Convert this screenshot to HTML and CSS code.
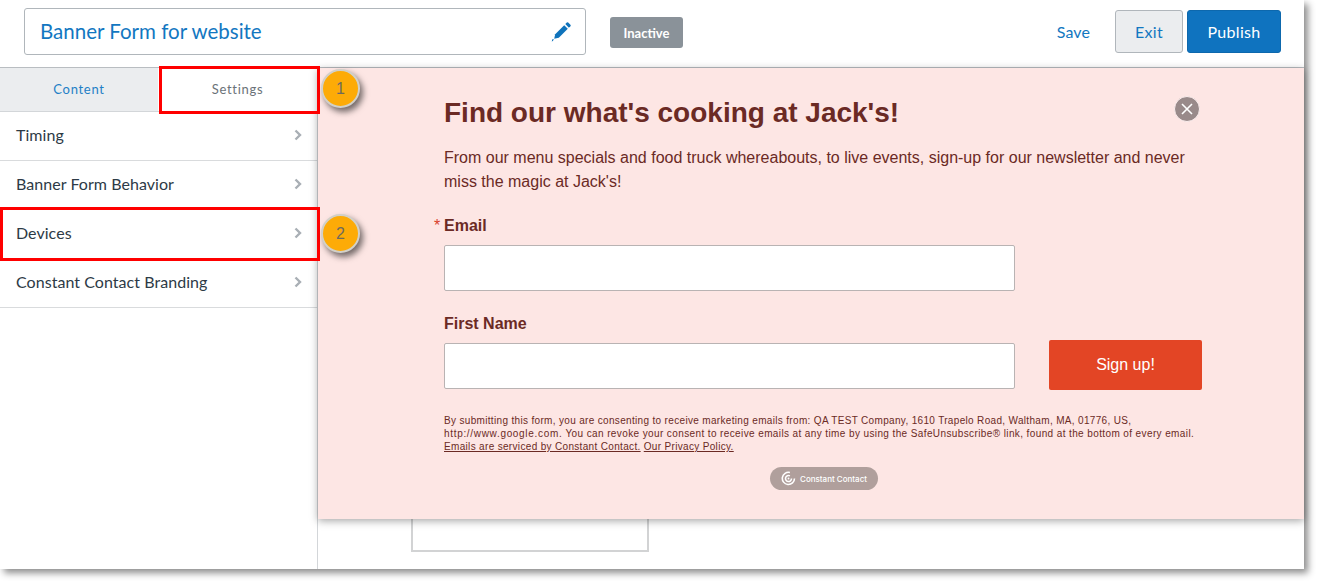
FILE: index.html
```html
<!DOCTYPE html>
<html lang="en">
<head>
<meta charset="utf-8">
<title>Banner Form for website</title>
<link rel="stylesheet" href="styles.css">
</head>
<body>
<div class="window">
  <header class="topbar">
    <div class="name-field">
      <span class="name-text">Banner Form for website</span>
      <svg class="pencil" viewBox="0 0 22 22" width="22" height="22"><path d="M6.2 14.2L15.2 5.2l3.6 3.6-9 9-4.6 1z"/><path d="M16.3 4.1l1.5-1.5a1 1 0 0 1 1.4 0l2.2 2.2a1 1 0 0 1 0 1.4l-1.5 1.5z"/><path d="M3.4 19.2l1.4-.3-.9 2-1.2.6z"/></svg>
    </div>
    <span class="status">Inactive</span>
    <div class="actions">
      <a class="save">Save</a>
      <button class="btn btn-exit">Exit</button>
      <button class="btn btn-publish">Publish</button>
    </div>
  </header>
  <div class="workspace">
    <aside class="sidebar">
      <div class="tabs">
        <div class="tab tab-content">Content</div>
        <div class="tab tab-settings">Settings</div>
      </div>
      <ul class="menu">
        <li class="menu-item">Timing<svg class="chev" viewBox="0 0 8 12" width="8" height="12"><path d="M1.5 1.5l4.5 4.5-4.5 4.5"/></svg></li>
        <li class="menu-item">Banner Form Behavior<svg class="chev" viewBox="0 0 8 12" width="8" height="12"><path d="M1.5 1.5l4.5 4.5-4.5 4.5"/></svg></li>
        <li class="menu-item">Devices<svg class="chev" viewBox="0 0 8 12" width="8" height="12"><path d="M1.5 1.5l4.5 4.5-4.5 4.5"/></svg></li>
        <li class="menu-item">Constant Contact Branding<svg class="chev" viewBox="0 0 8 12" width="8" height="12"><path d="M1.5 1.5l4.5 4.5-4.5 4.5"/></svg></li>
      </ul>
    </aside>
    <main class="canvas">
      <div class="under-box"></div>
      <section class="banner">
        <h1 class="banner-title">Find our what's cooking at Jack's!</h1>
        <svg class="close" viewBox="0 0 26 26" width="26" height="26"><circle cx="13" cy="13" r="12.5" fill="#998a8a" stroke="#fbeeee" stroke-width="1"/><path d="M8 8l10 10M18 8L8 18" stroke="#fff" stroke-width="1.6" fill="none"/></svg>
        <p class="banner-intro">From our menu specials and food truck whereabouts, to live events, sign-up for our newsletter and never miss the magic at Jack's!</p>
        <div class="form-grid">
          <div class="field">
            <label class="label label-req">Email</label>
            <div class="input"></div>
          </div>
          <div class="field field-name">
            <label class="label">First Name</label>
            <div class="input"></div>
          </div>
          <button class="signup">Sign up!</button>
        </div>
        <p class="legal">By submitting this form, you are consenting to receive marketing emails from: QA TEST Company, 1610 Trapelo Road, Waltham, MA, 01776, US, <span class="legal-url">http://www.google.com.</span> <span class="legal-mid">You can revoke your consent to receive emails at any time by using the SafeUnsubscribe® link, found at the bottom of every email.</span> <u>Emails are serviced by Constant Contact.</u> <u>Our Privacy Policy.</u></p>
        <div class="brand-row">
          <span class="brand">
            <svg viewBox="0 0 16 16" width="15" height="15"><g fill="none" stroke="#fff" stroke-width="1.7"><path d="M9.5 1.6A6.5 6.5 0 1 0 14.4 8"/><path d="M9.5 5.2A3.2 3.2 0 1 0 11.2 8"/></g><circle cx="8" cy="8" r="1" fill="#fff"/></svg>
            <span>Constant Contact</span>
          </span>
        </div>
      </section>
    </main>
  </div>
  <div class="highlight hl-settings"></div>
  <div class="highlight hl-devices"></div>
  <div class="marker m1">1</div>
  <div class="marker m2">2</div>
</div>
</body>
</html>
```
FILE: styles.css
```css
* { box-sizing: border-box; }
html, body { margin: 0; padding: 0; background: #fff; }
body { width: 1319px; height: 584px; overflow: hidden; font-family: "Lato", "Noto Sans", sans-serif; }

.window {
  position: relative;
  width: 1304px;
  height: 569px;
  background: #fff;
  box-shadow: 4px 4px 7px rgba(0, 0, 0, .45);
  display: flex;
  flex-direction: column;
}

.topbar {
  height: 68px;
  flex: none;
  display: flex;
  align-items: flex-start;
  padding: 8px 23px 0 24px;
  border-bottom: 1px solid #b9bdc1;
}
.name-field {
  width: 562px;
  height: 47px;
  border: 1px solid #b0b6bb;
  border-radius: 3px;
  display: flex;
  align-items: center;
  justify-content: space-between;
  padding: 0 14px 2px 15px;
}
.name-text { font-size: 20.5px; color: #1277c1; }
.pencil { fill: #0f73bb; }
.status {
  margin: 9px 0 0 24px;
  width: 73px;
  height: 31px;
  border-radius: 3px;
  background: #8a9299;
  color: #fff;
  font-size: 13px;
  font-weight: 700;
  display: flex;
  align-items: center;
  justify-content: center;
}
.actions { margin-left: auto; margin-top: 2px; display: flex; align-items: center; gap: 4px; }
.save { font-size: 16px; color: #1277c1; margin-right: 21px; letter-spacing: .1px; }
.btn {
  height: 43px;
  border-radius: 3px;
  font-family: inherit;
  font-size: 16px;
  letter-spacing: .3px;
  padding: 0;
}
.btn-exit { width: 68px; background: #ebedef; border: 1px solid #b0b6bb; color: #1277c1; }
.btn-publish { width: 94px; background: #0f73bf; border: 1px solid #0d68ad; color: #fff; }

.workspace { flex: 1; display: flex; min-height: 0; }

.sidebar { width: 318px; flex: none; border-right: 1px solid #d3d6d9; }
.tabs { display: flex; height: 44px; border-bottom: 1px solid #d3d6d9; }
.tab { display: flex; align-items: center; justify-content: center; font-size: 13px; letter-spacing: .7px; padding-bottom: 1px; }
.tab-content { width: 158px; background: #ebedef; color: #1f80c6; }
.tab-settings { flex: 1; background: #fff; color: #6b7278; }
.menu { list-style: none; margin: 0; padding: 0; }
.menu-item {
  height: 49px;
  padding: 0 15px 3px 16px;
  border-bottom: 1px solid #d9dbdd;
  display: flex;
  align-items: center;
  justify-content: space-between;
  font-size: 16px;
  letter-spacing: .05px;
  color: #2d3a46;
}
.chev { fill: none; stroke: #a9afb5; stroke-width: 2.4; }

.canvas { flex: 1; position: relative; min-width: 0; }
.under-box {
  position: absolute;
  left: 93px;
  top: 400px;
  width: 238px;
  height: 84px;
  border: 2px solid #d2d3d4;
  border-top: 0;
}
.banner {
  position: relative;
  height: 451px;
  background: #fde6e4;
  box-shadow: 0 2px 8px rgba(0, 0, 0, .35);
  padding: 28px 102px 0 126px;
  font-family: "Liberation Sans", Arial, sans-serif;
  color: #6b2a24;
}
.banner-title { margin: 0; font-size: 28px; line-height: 34px; font-weight: 700; }
.close { position: absolute; left: 856px; top: 28px; }
.banner-intro { margin: 16px 0 0; font-size: 16px; line-height: 24px; }
.form-grid {
  display: grid;
  grid-template-columns: 571px 153px;
  column-gap: 34px;
  margin-top: 22px;
}
.field { grid-column: 1; display: flex; flex-direction: column; }
.field-name { margin-top: 23px; }
.label { position: relative; font-size: 16px; font-weight: 700; line-height: 20px; margin-bottom: 9px; }
.label-req::before { content: "*"; position: absolute; left: -10px; top: 0; color: #d8402a; font-weight: 400; }
.input { height: 46px; background: #fff; border: 1px solid #b9b3b3; border-radius: 2px; }
.signup {
  grid-column: 2;
  grid-row: 2;
  align-self: end;
  height: 50px;
  margin-bottom: -1px;
  background: #e34525;
  border: 0;
  border-radius: 2px;
  color: #fff;
  font-family: inherit;
  font-size: 16px;
}
.legal { margin: 25px 0 0; font-size: 10px; line-height: 13px; width: 758px; letter-spacing: .33px; }
.legal-url { letter-spacing: .68px; }
.legal-mid { letter-spacing: .39px; }
.brand-row { display: flex; justify-content: center; margin-top: 14px; width: 760px; }
.brand {
  width: 108px;
  height: 23px;
  border-radius: 11.5px;
  background: #b09f9c;
  color: #fff;
  display: flex;
  align-items: center;
  justify-content: center;
  gap: 4px;
  font-family: "Inter", sans-serif;
  font-size: 8px;
  font-weight: 500;
}

.highlight { position: absolute; border: 3px solid #f00; }
.hl-settings { left: 159px; top: 66px; width: 161px; height: 48px; }
.hl-devices { left: 0; top: 207px; width: 320px; height: 54px; }
.marker {
  position: absolute;
  left: 321px;
  width: 39px;
  height: 39px;
  border-radius: 50%;
  background: #fdab07;
  border: 2px solid #d2d0c8;
  box-shadow: 3px 4px 6px rgba(0, 0, 0, .55);
  color: #6e6a5e;
  font-family: "Liberation Sans", Arial, sans-serif;
  font-size: 16px;
  display: flex;
  align-items: center;
  justify-content: center;
}
.m1 { top: 69px; }
.m2 { top: 214px; }
```
